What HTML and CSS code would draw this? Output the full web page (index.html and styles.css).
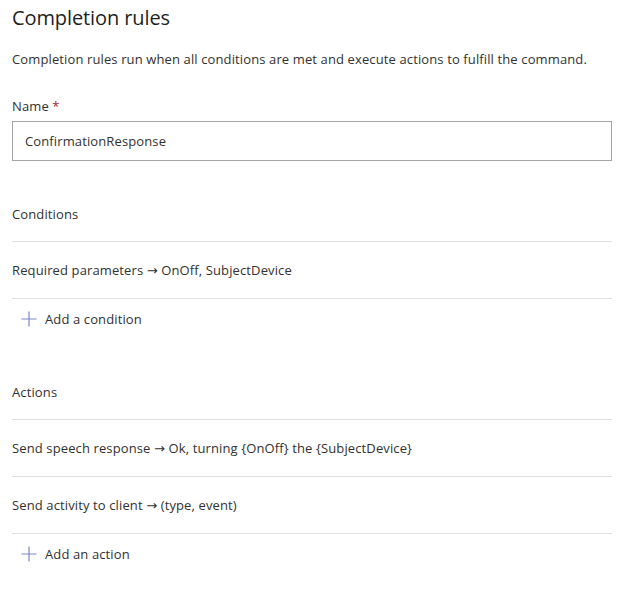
FILE: index.html
```html
<!DOCTYPE html>
<html lang="en">
<head>
<meta charset="utf-8">
<title>Completion rules</title>
<link rel="stylesheet" href="styles.css">
</head>
<body>
<main class="panel">
  <h1 class="title">Completion rules</h1>
  <p class="desc">Completion rules run when all conditions are met and execute actions to fulfill the command.</p>

  <div class="field">
    <label class="field-label">Name <span class="req">*</span></label>
    <div class="input">ConfirmationResponse</div>
  </div>

  <section class="section">
    <div class="section-label">Conditions</div>
    <ul class="list">
      <li class="row">Required parameters → OnOff, SubjectDevice</li>
    </ul>
    <button class="add">
      <svg class="plus" width="16" height="16" viewBox="0 0 16 16"><path d="M8 0.5V15.5M0.5 8H15.5" stroke="#7b88c9" stroke-width="1.2" fill="none"/></svg>
      <span>Add a condition</span>
    </button>
  </section>

  <section class="section">
    <div class="section-label">Actions</div>
    <ul class="list">
      <li class="row">Send speech response → Ok, turning {OnOff} the {SubjectDevice}</li>
      <li class="row">Send activity to client → (type, event)</li>
    </ul>
    <button class="add">
      <svg class="plus" width="16" height="16" viewBox="0 0 16 16"><path d="M8 0.5V15.5M0.5 8H15.5" stroke="#7b88c9" stroke-width="1.2" fill="none"/></svg>
      <span>Add an action</span>
    </button>
  </section>
</main>
</body>
</html>
```
FILE: styles.css
```css
* { box-sizing: border-box; }
html, body { margin: 0; padding: 0; background: #ffffff; }
body {
  font-family: "Open Sans", "Noto Sans", "DejaVu Sans", sans-serif;
  font-size: 13px;
  letter-spacing: 0.12px;
  color: #323130;
}
.panel {
  width: 612px;
  padding: 4px 0 0 12px;
}
.title {
  margin: 0;
  font-size: 20px;
  line-height: 28px;
  font-weight: 400;
  letter-spacing: -0.1px;
  color: #201f1e;
}
.desc {
  margin: 17px 0 0;
  line-height: 20px;
}
.field { margin-top: 27px; }
.field-label {
  display: block;
  line-height: 20px;
  font-weight: 400;
}
.req { color: #a4262c; }
.input {
  margin-top: 5px;
  height: 40px;
  border: 1px solid #a6a6a6;
  padding: 0 12px;
  display: flex;
  align-items: center;
}
.section { margin-top: 43px; }
.section-label {
  line-height: 20px;
  margin-bottom: 17px;
}
.list {
  list-style: none;
  margin: 0;
  padding: 0;
  border-top: 1px solid #e1dfdd;
}
.row {
  height: 57px;
  display: flex;
  align-items: center;
  border-bottom: 1px solid #e1dfdd;
}
.add {
  display: flex;
  align-items: center;
  gap: 8px;
  height: 40px;
  padding: 0 0 0 9px;
  border: 0;
  background: transparent;
  font: inherit;
  letter-spacing: inherit;
  color: #323130;
  cursor: pointer;
}
.plus { flex: none; }
```
